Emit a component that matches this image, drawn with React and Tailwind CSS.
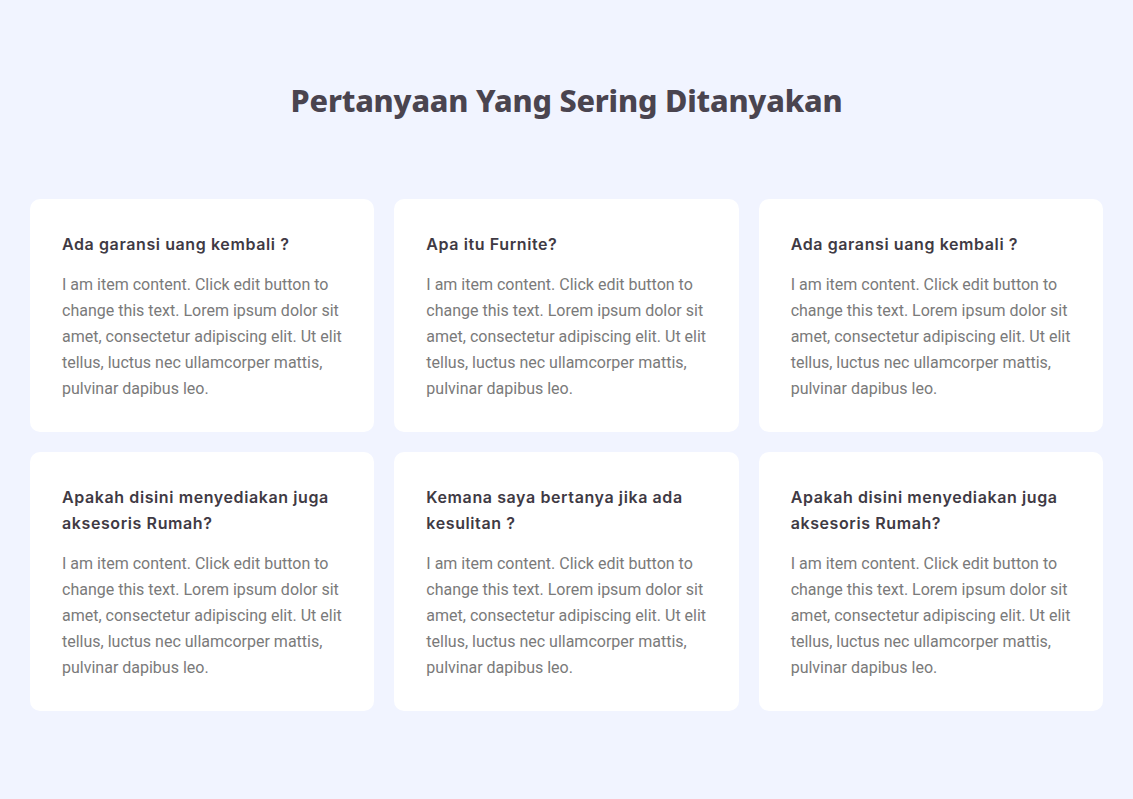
const faqs = [
  { q: 'Ada garansi uang kembali ?' },
  { q: 'Apa itu Furnite?' },
  { q: 'Ada garansi uang kembali ?' },
  { q: 'Apakah disini menyediakan juga aksesoris Rumah?' },
  { q: 'Kemana saya bertanya jika ada kesulitan ?' },
  { q: 'Apakah disini menyediakan juga aksesoris Rumah?' },
];

const answer =
  'I am item content. Click edit button to change this text. Lorem ipsum dolor sit amet, consectetur adipiscing elit. Ut elit tellus, luctus nec ullamcorper mattis, pulvinar dapibus leo.';

export default function App() {
  return (
    <div className="min-h-[799px] bg-[#f1f4ff] px-[30px] pt-[78px] pb-[89px]">
      {/* Heading */}
      <h2 className="text-center text-[30.6px] leading-[44px] font-extrabold text-[#4a444f] font-['Noto_Sans',sans-serif] tracking-[-0.2px]">
        Pertanyaan Yang Sering Ditanyakan
      </h2>

      {/* FAQ grid */}
      <div className="mt-[77px] grid grid-cols-3 gap-5">
        {faqs.map((item, i) => (
          <div key={i} className="bg-white rounded-[10px] pt-8 px-8 pb-[30px]">
            <h3 className="text-[16px] leading-[26px] font-semibold tracking-[0.6px] text-[#3f3a44] font-['Inter',sans-serif] mb-[15px]">
              {item.q}
            </h3>
            <p className="text-[16px] leading-[26px] text-[#7a7a7a] font-['Roboto',sans-serif]">
              {answer}
            </p>
          </div>
        ))}
      </div>
    </div>
  );
}
